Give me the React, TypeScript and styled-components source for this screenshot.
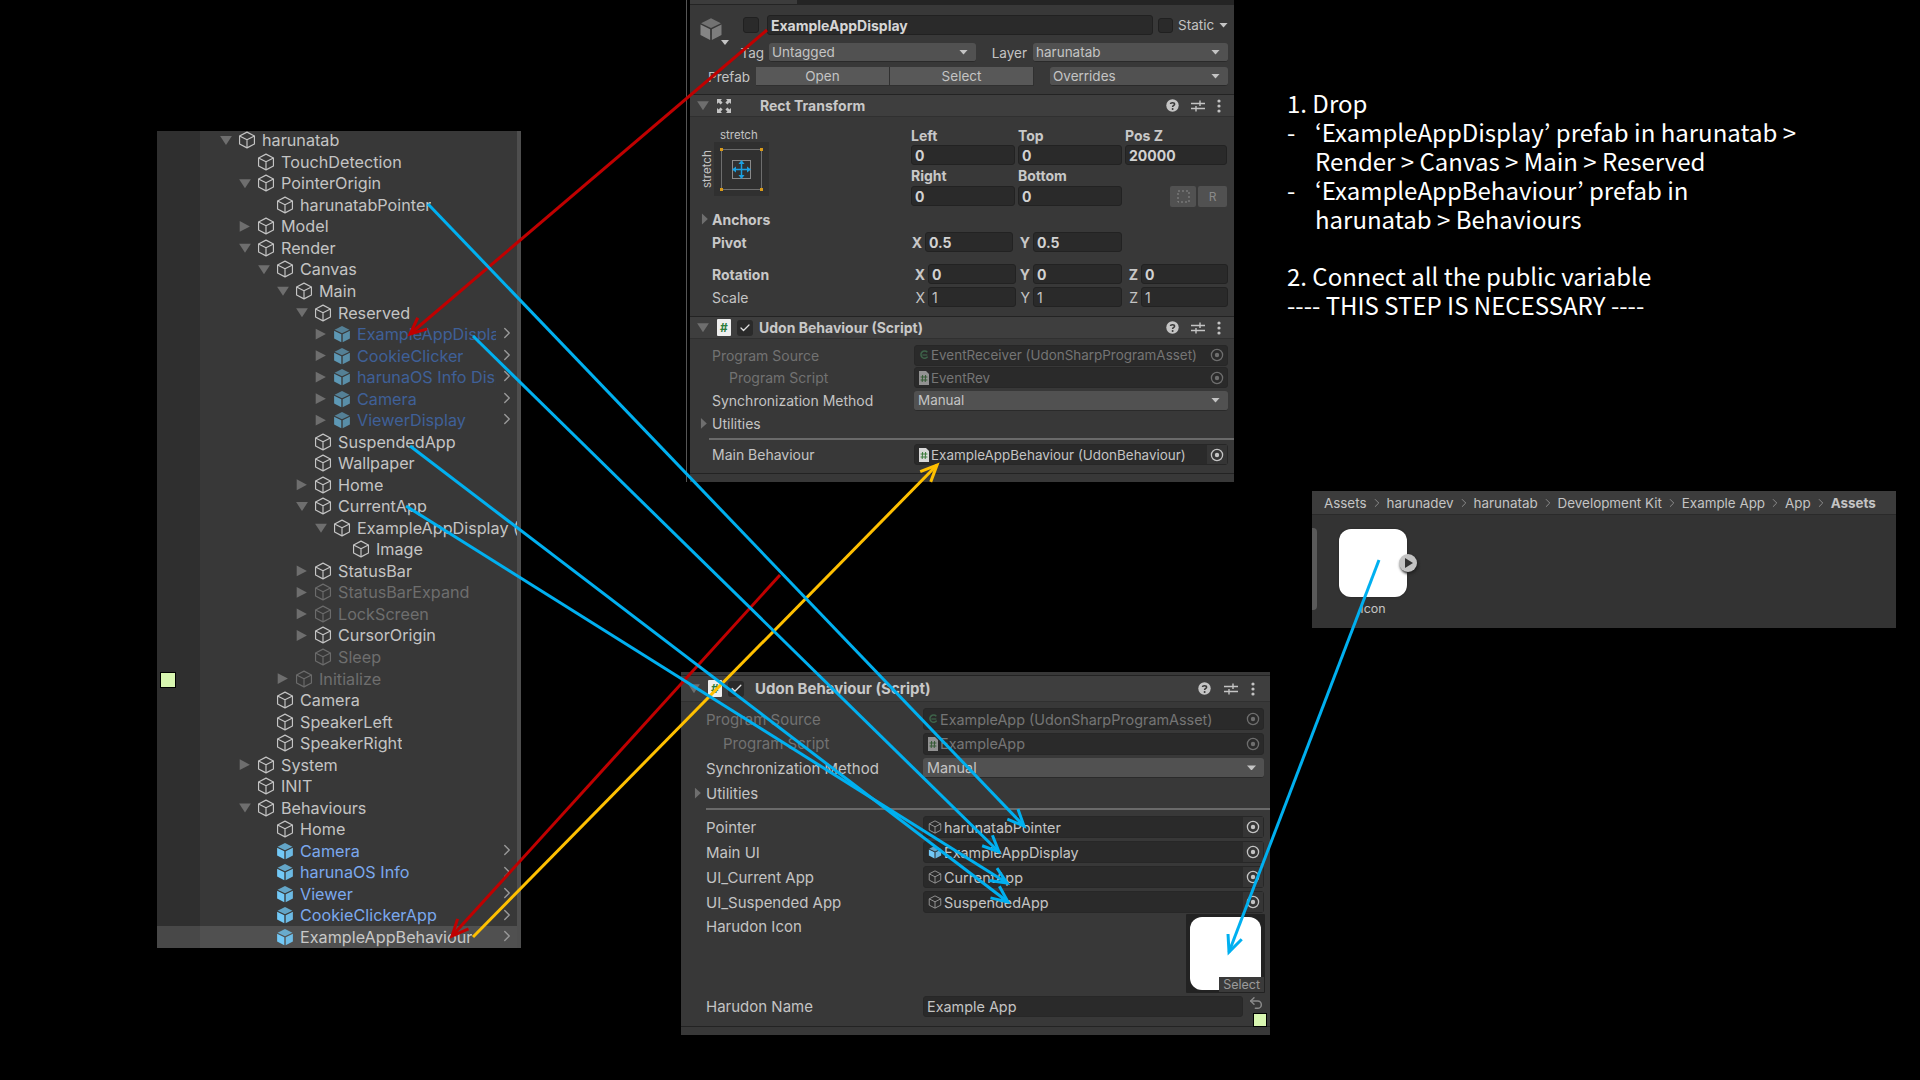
import React from "react";
import styled, { createGlobalStyle } from "styled-components";
import { Check, ChevronRight, Undo2 } from "lucide-react";

const GlobalStyle = createGlobalStyle`
  html, body {
    margin: 0;
    padding: 0;
    background: #000;
  }
  * { box-sizing: border-box; }
`;

type Node = {
  label: string;
  depth: number;
  caret?: "open" | "closed";
  prefab?: "on" | "off";
  dim?: boolean;
  more?: boolean;
  selected?: boolean;
  clip?: boolean;
};

const tree: Node[] = [
  { label: "harunatab", depth: 0, caret: "open" },
  { label: "TouchDetection", depth: 1 },
  { label: "PointerOrigin", depth: 1, caret: "open" },
  { label: "harunatabPointer", depth: 2 },
  { label: "Model", depth: 1, caret: "closed" },
  { label: "Render", depth: 1, caret: "open" },
  { label: "Canvas", depth: 2, caret: "open" },
  { label: "Main", depth: 3, caret: "open" },
  { label: "Reserved", depth: 4, caret: "open" },
  { label: "ExampleAppDisplay", depth: 5, caret: "closed", prefab: "off", more: true, clip: true },
  { label: "CookieClicker", depth: 5, caret: "closed", prefab: "off", more: true },
  { label: "harunaOS Info Display", depth: 5, caret: "closed", prefab: "off", more: true, clip: true },
  { label: "Camera", depth: 5, caret: "closed", prefab: "off", more: true },
  { label: "ViewerDisplay", depth: 5, caret: "closed", prefab: "off", more: true },
  { label: "SuspendedApp", depth: 4 },
  { label: "Wallpaper", depth: 4 },
  { label: "Home", depth: 4, caret: "closed" },
  { label: "CurrentApp", depth: 4, caret: "open" },
  { label: "ExampleAppDisplay (Clone)", depth: 5, caret: "open", clip: true },
  { label: "Image", depth: 6 },
  { label: "StatusBar", depth: 4, caret: "closed" },
  { label: "StatusBarExpand", depth: 4, caret: "closed", dim: true },
  { label: "LockScreen", depth: 4, caret: "closed", dim: true },
  { label: "CursorOrigin", depth: 4, caret: "closed" },
  { label: "Sleep", depth: 4, dim: true },
  { label: "Initialize", depth: 3, caret: "closed", dim: true },
  { label: "Camera", depth: 2 },
  { label: "SpeakerLeft", depth: 2 },
  { label: "SpeakerRight", depth: 2 },
  { label: "System", depth: 1, caret: "closed" },
  { label: "INIT", depth: 1 },
  { label: "Behaviours", depth: 1, caret: "open" },
  { label: "Home", depth: 2 },
  { label: "Camera", depth: 2, prefab: "on", more: true },
  { label: "harunaOS Info", depth: 2, prefab: "on", more: true },
  { label: "Viewer", depth: 2, prefab: "on", more: true },
  { label: "CookieClickerApp", depth: 2, prefab: "on", more: true },
  { label: "ExampleAppBehaviour", depth: 2, prefab: "on", more: true, selected: true },
];

const arrows = [
  { x1: 767, y1: 30, x2: 410, y2: 334, color: "#c00000" },
  { x1: 780, y1: 575, x2: 452, y2: 936, color: "#c00000" },
  { x1: 473, y1: 937, x2: 937, y2: 465, color: "#ffc000" },
  { x1: 428, y1: 204, x2: 1024, y2: 826, color: "#00b0f0" },
  { x1: 473, y1: 336, x2: 999, y2: 852, color: "#00b0f0" },
  { x1: 410, y1: 446, x2: 1008, y2: 902, color: "#00b0f0" },
  { x1: 406, y1: 506, x2: 1007, y2: 883, color: "#00b0f0" },
  { x1: 1379, y1: 560, x2: 1229, y2: 952, color: "#00b0f0" },
];

const crumbs = ["Assets", "harunadev", "harunatab", "Development Kit", "Example App", "App"];

const CubeIcon = ({ prefab, size = 18 }: { prefab?: boolean; size?: number }) =>
  prefab ? (
    <svg width={size} height={size} viewBox="0 0 16 16">
      <path d="M8 .8 14.6 4.2 8 7.4 1.4 4.2Z" fill="currentColor" opacity=".75" />
      <path d="M1 5 7.4 8.2V15.4L1 12Z" fill="currentColor" />
      <path d="M15 5 8.6 8.2V15.4L15 12Z" fill="currentColor" opacity=".9" />
    </svg>
  ) : (
    <svg width={size} height={size} viewBox="0 0 16 16" fill="none" stroke="currentColor" strokeWidth="1.05" strokeLinejoin="round">
      <path d="M8 1 14.6 4.4V11.6L8 15 1.4 11.6V4.4Z" />
      <path d="M1.4 4.4 8 7.8 14.6 4.4M8 7.8V15" />
    </svg>
  );

const TargetIcon = () => (
  <svg width="14" height="14" viewBox="0 0 14 14" fill="none">
    <circle cx="7" cy="7" r="5.6" stroke="currentColor" strokeWidth="1.3" />
    <circle cx="7" cy="7" r="2.2" fill="currentColor" />
  </svg>
);

const ScriptIcon = () => (
  <svg width="10" height="14" viewBox="0 0 10 14">
    <path d="M0 0H7L10 3V14H0Z" fill="#d8d8d8" />
    <path d="M3.6 4 3.2 11M6.6 4 6.2 11M1.6 6H8.4M1.6 9H8.4" stroke="#3c7a3c" strokeWidth="1" fill="none" />
  </svg>
);

const SharpIcon = () => (
  <svg width="10" height="14" viewBox="0 0 12 14" fill="none">
    <path d="M10 3.6A4.4 4.4 0 1 0 10.4 9" stroke="#4b8a5f" strokeWidth="1.8" />
    <path d="M4 7H10" stroke="#4b8a5f" strokeWidth="1.5" />
  </svg>
);

const MoveIcon = () => (
  <svg width="16" height="16" viewBox="0 0 16 16" fill="#c4c4c4">
    <path d="M1 1H6L4.6 2.6 6.6 4.6 4.6 6.6 2.6 4.6 1 6ZM15 1H10L11.4 2.6 9.4 4.6 11.4 6.6 13.4 4.6 15 6ZM1 15H6L4.6 13.4 6.6 11.4 4.6 9.4 2.6 11.4 1 10ZM15 15H10L11.4 13.4 9.4 11.4 11.4 9.4 13.4 11.4 15 10Z" />
  </svg>
);

const HeaderTools = ({ wide }: { wide?: boolean }) => (
  <Tools $wide={wide}>
    <svg width="13" height="13" viewBox="0 0 13 13">
      <circle cx="6.5" cy="6.5" r="6.2" fill="#c4c4c4" />
      <path d="M4.4 5C4.6 3.4 8.6 3.4 8.6 5.2 8.6 6.4 6.6 6.4 6.6 8" stroke="#383838" strokeWidth="1.5" fill="none" />
      <circle cx="6.6" cy="10" r="1" fill="#383838" />
    </svg>
    <svg width="14" height="14" viewBox="0 0 14 14" stroke="#c4c4c4" strokeWidth="1.4" fill="none">
      <path d="M0 4.5H14M0 9.5H14M9 1.5V7M5 7V12.5" />
    </svg>
    <svg width="4" height="14" viewBox="0 0 4 14" fill="#c4c4c4">
      <circle cx="2" cy="2" r="1.6" />
      <circle cx="2" cy="7" r="1.6" />
      <circle cx="2" cy="12" r="1.6" />
    </svg>
  </Tools>
);

const AnchorPreset = () => (
  <AnchorBox>
    <svg width="55" height="54" viewBox="0 0 55 54" fill="none">
      <rect x="7.5" y="7.5" width="40" height="40" stroke="#6e6e6e" />
      <rect x="6" y="6" width="3" height="3" fill="#d89a1a" />
      <rect x="46" y="6" width="3" height="3" fill="#d89a1a" />
      <rect x="6" y="46" width="3" height="3" fill="#d89a1a" />
      <rect x="46" y="46" width="3" height="3" fill="#d89a1a" />
      <rect x="18.5" y="18.5" width="18" height="18" stroke="#8a8a8a" />
      <path d="M20 27.5H35M27.5 20V35" stroke="#1ba1e2" strokeWidth="1.5" />
      <path d="M18 27.5 22 24.5V30.5ZM37 27.5 33 24.5V30.5ZM27.5 18 24.5 22H30.5ZM27.5 37 24.5 33H30.5Z" fill="#1ba1e2" />
    </svg>
  </AnchorBox>
);

const ObjectField = ({
  icon,
  children,
  dim,
}: {
  icon: React.ReactNode;
  children: React.ReactNode;
  dim?: boolean;
}) => (
  <Field $dim={dim}>
    <FieldIcon $dim={dim}>{icon}</FieldIcon>
    <FieldText>{children}</FieldText>
    <TargetSlot $dim={dim}>
      <TargetIcon />
    </TargetSlot>
  </Field>
);

const Prop = ({ label, indent, dim, children }: { label: string; indent?: boolean; dim?: boolean; children?: React.ReactNode }) => (
  <PropRow>
    <PropLabel $indent={indent} $dim={dim}>
      {label}
    </PropLabel>
    {children}
  </PropRow>
);

const App = () => (
  <Canvas>
    <GlobalStyle />

    <TreePanel>
      <TreeList>
        {tree.map((n, i) => (
          <TreeRow key={i} $depth={n.depth} $selected={n.selected}>
            <Caret $kind={n.caret} />
            <TreeIcon $prefab={n.prefab} $dim={n.dim}>
              <CubeIcon prefab={!!n.prefab} />
            </TreeIcon>
            <TreeLabel $prefab={n.prefab} $dim={n.dim} $clip={n.clip} $selected={n.selected}>
              {n.label}
            </TreeLabel>
            {n.more && (
              <More>
                <ChevronRight size={18} strokeWidth={1.8} />
              </More>
            )}
          </TreeRow>
        ))}
      </TreeList>
      <Marker $left={3} $top={541} />
    </TreePanel>

    <TopInspector>
      <TabStrip>
        <ActiveTab />
      </TabStrip>
      <IdentityBlock>
        <BigCube>
          <CubeIcon prefab size={24} />
          <BigCubeCaret />
        </BigCube>
        <IdentityLines>
          <NameLine>
            <CheckBox $size={16} />
            <NameField>ExampleAppDisplay</NameField>
            <CheckBox $size={15} $ml={5} />
            <StaticLabel>Static</StaticLabel>
            <MiniCaret />
          </NameLine>
          <TagLine>
            <TagLabel $w={25}>Tag</TagLabel>
            <Drop $w={207} $ml={5}>
              Untagged
              <MiniCaret />
            </Drop>
            <TagLabel $w={51}>Layer</TagLabel>
            <Drop $w={195} $ml={6}>
              harunatab
              <MiniCaret />
            </Drop>
          </TagLine>
        </IdentityLines>
      </IdentityBlock>
      <PrefabLine>
        <TagLabel $w={60}>Prefab</TagLabel>
        <PrefabButton $w={134} $ml={6}>
          Open
        </PrefabButton>
        <PrefabButton $w={144} $ml={0}>
          Select
        </PrefabButton>
        <Drop $w={178} $ml={16}>
          Overrides
          <MiniCaret />
        </Drop>
      </PrefabLine>

      <ComponentHeader $mt={8}>
        <Caret $kind="open" />
        <HeaderIcon>
          <MoveIcon />
        </HeaderIcon>
        <HeaderTitle $ml={28}>Rect Transform</HeaderTitle>
        <HeaderTools />
      </ComponentHeader>

      <RectBody>
        <AnchorColumn>
          <SmallLabel>stretch</SmallLabel>
          <AnchorInner>
            <SideLabel>stretch</SideLabel>
            <AnchorPreset />
          </AnchorInner>
        </AnchorColumn>
        <RectGrid>
          <RectLabel>Left</RectLabel>
          <RectLabel>Top</RectLabel>
          <RectLabel>Pos Z</RectLabel>
          <NumberField>0</NumberField>
          <NumberField>0</NumberField>
          <NumberField>20000</NumberField>
          <RectLabel>Right</RectLabel>
          <RectLabel>Bottom</RectLabel>
          <span />
          <NumberField>0</NumberField>
          <NumberField>0</NumberField>
          <RectButtons>
            <RectButton $w={26}>
              <svg width="13" height="13" viewBox="0 0 13 13" fill="none" stroke="#8a8a8a" strokeDasharray="2 2">
                <rect x="1" y="1" width="11" height="11" />
              </svg>
            </RectButton>
            <RectButton $w={29}>R</RectButton>
          </RectButtons>
        </RectGrid>
      </RectBody>

      <AnchorsLine>
        <Caret $kind="closed" $size={8} />
        <BoldLabel>Anchors</BoldLabel>
      </AnchorsLine>

      <VectorRow $mt={4}>
        <BoldLabel $w={198}>Pivot</BoldLabel>
        <AxisBold $w={15}>X</AxisBold>
        <NumberField $w={88} $bold>0.5</NumberField>
        <AxisBold $w={20}>Y</AxisBold>
        <NumberField $w={89} $bold>0.5</NumberField>
      </VectorRow>
      <VectorRow $mt={12}>
        <BoldLabel $w={202}>Rotation</BoldLabel>
        <AxisBold $w={14}>X</AxisBold>
        <NumberField $w={88} $bold>0</NumberField>
        <AxisBold $w={17}>Y</AxisBold>
        <NumberField $w={89} $bold>0</NumberField>
        <AxisBold $w={19}>Z</AxisBold>
        <NumberField $w={87} $bold>0</NumberField>
      </VectorRow>
      <VectorRow $mt={3}>
        <PropLabel $w={202}>Scale</PropLabel>
        <Axis $w={14}>X</Axis>
        <NumberField $w={88}>1</NumberField>
        <Axis $w={17}>Y</Axis>
        <NumberField $w={89}>1</NumberField>
        <Axis $w={19}>Z</Axis>
        <NumberField $w={87}>1</NumberField>
      </VectorRow>

      <ComponentHeader $mt={9}>
        <Caret $kind="open" />
        <HeaderIcon>
          <ScriptPage>#</ScriptPage>
        </HeaderIcon>
        <HeaderCheck>
          <Check size={12} strokeWidth={2.5} />
        </HeaderCheck>
        <HeaderTitle $ml={6}>Udon Behaviour (Script)</HeaderTitle>
        <HeaderTools />
      </ComponentHeader>

      <PropList $gap={1.8} $pad={22} $fieldAt={202} $pt={5.5} $row={21}>
        <Prop label="Program Source" dim>
          <ObjectField icon={<SharpIcon />} dim>
            EventReceiver (UdonSharpProgramAsset)
          </ObjectField>
        </Prop>
        <Prop label="Program Script" indent dim>
          <ObjectField icon={<ScriptIcon />} dim>
            EventRev
          </ObjectField>
        </Prop>
        <Prop label="Synchronization Method">
          <WideDrop>
            Manual
            <MiniCaret />
          </WideDrop>
        </Prop>
        <UtilitiesRow>
          <Caret $kind="closed" $size={8} />
          <PropLabel>Utilities</PropLabel>
        </UtilitiesRow>
      </PropList>
      <Rule $left={19} $mt={4} />
      <PropList $gap={2} $pad={22} $fieldAt={202} $pt={4.5} $row={21}>
        <Prop label="Main Behaviour">
          <ObjectField icon={<ScriptIcon />}>ExampleAppBehaviour (UdonBehaviour)</ObjectField>
        </Prop>
      </PropList>
      <BottomLine $mt={7.5} />
    </TopInspector>

    <Instructions>
      <Line>1. Drop</Line>
      <Bullet>
        <span>-</span>
        <span>
          ‘ExampleAppDisplay’ prefab in harunatab &gt;
          <br />
          Render &gt; Canvas &gt; Main &gt; Reserved
        </span>
      </Bullet>
      <Bullet>
        <span>-</span>
        <span>
          ‘ExampleAppBehaviour’ prefab in
          <br />
          harunatab &gt; Behaviours
        </span>
      </Bullet>
      <Gap />
      <Line>2. Connect all the public variable</Line>
      <Line>---- THIS STEP IS NECESSARY ----</Line>
    </Instructions>

    <ProjectPanel>
      <Breadcrumb>
        {crumbs.map((c) => (
          <React.Fragment key={c}>
            <span>{c}</span>
            <ChevronRight size={14} strokeWidth={1.4} />
          </React.Fragment>
        ))}
        <strong>Assets</strong>
      </Breadcrumb>
      <ProjectBody>
        <Splitter />
        <Asset>
          <AssetThumb>
            <PlayBadge />
          </AssetThumb>
          <AssetName>Icon</AssetName>
        </Asset>
      </ProjectBody>
    </ProjectPanel>

    <BottomInspector>
      <ComponentHeader $h={27} $mt={3}>
        <Caret $kind="open" />
        <HeaderIcon>
          <ScriptPage>#</ScriptPage>
        </HeaderIcon>
        <HeaderCheck>
          <Check size={13} strokeWidth={2.5} />
        </HeaderCheck>
        <HeaderTitle $ml={11}>Udon Behaviour (Script)</HeaderTitle>
        <HeaderTools wide />
      </ComponentHeader>
      <PropList $gap={2.7} $pad={25} $fieldAt={217} $pt={6} $row={22}>
        <Prop label="Program Source" dim>
          <ObjectField icon={<SharpIcon />} dim>
            ExampleApp (UdonSharpProgramAsset)
          </ObjectField>
        </Prop>
        <Prop label="Program Script" indent dim>
          <ObjectField icon={<ScriptIcon />} dim>
            ExampleApp
          </ObjectField>
        </Prop>
        <Prop label="Synchronization Method">
          <WideDrop>
            Manual
            <MiniCaret />
          </WideDrop>
        </Prop>
        <UtilitiesRow>
          <Caret $kind="closed" $size={8} />
          <PropLabel>Utilities</PropLabel>
        </UtilitiesRow>
      </PropList>
      <Rule $left={25} $mt={4} />
      <PropList $gap={3} $pad={25} $fieldAt={217} $pt={6} $row={22}>
        <Prop label="Pointer">
          <ObjectField icon={<GoIcon><CubeIcon size={14} /></GoIcon>}>harunatabPointer</ObjectField>
        </Prop>
        <Prop label="Main UI">
          <ObjectField icon={<PrefabIcon><CubeIcon prefab size={14} /></PrefabIcon>}>ExampleAppDisplay</ObjectField>
        </Prop>
        <Prop label="UI_Current App">
          <ObjectField icon={<GoIcon><CubeIcon size={14} /></GoIcon>}>CurrentApp</ObjectField>
        </Prop>
        <Prop label="UI_Suspended App">
          <ObjectField icon={<GoIcon><CubeIcon size={14} /></GoIcon>}>SuspendedApp</ObjectField>
        </Prop>
      </PropList>
      <IconRow>
        <IconLabel>Harudon Icon</IconLabel>
        <IconPicker>
          <IconWhite />
          <SelectTag>Select</SelectTag>
        </IconPicker>
      </IconRow>
      <NameRow>
        <PropLabel>Harudon Name</PropLabel>
        <TextField>Example App</TextField>
        <RevertIcon>
          <Undo2 size={16} strokeWidth={2.2} />
        </RevertIcon>
      </NameRow>
      <BottomLine $mt={9} />
      <Marker $left={572} $top={341} $size={14} />
    </BottomInspector>

    <ArrowLayer width="1920" height="1080" viewBox="0 0 1920 1080" fill="none" strokeWidth="3">
      {arrows.map((a, i) => {
        const angle = Math.atan2(a.y2 - a.y1, a.x2 - a.x1);
        const wing = (off: number) => `${a.x2 - 18 * Math.cos(angle + off)},${a.y2 - 18 * Math.sin(angle + off)}`;
        return (
          <g key={i} stroke={a.color}>
            <line x1={a.x1} y1={a.y1} x2={a.x2} y2={a.y2} />
            <polyline points={`${wing(0.42)} ${a.x2},${a.y2} ${wing(-0.42)}`} />
          </g>
        );
      })}
    </ArrowLayer>
  </Canvas>
);

const Canvas = styled.div`
  position: relative;
  width: 1920px;
  height: 1080px;
  overflow: hidden;
  background: #000;
  color: #c4c4c4;
  font-family: Inter, "Liberation Sans", sans-serif;
  font-size: 14px;
`;

const TreePanel = styled.div`
  position: absolute;
  left: 157px;
  top: 131px;
  width: 364px;
  height: 817px;
  overflow: hidden;
  background: linear-gradient(90deg, #2f2f2f 0 43px, #383838 43px 360px, #4e4e4e 360px);
`;

const TreeList = styled.div`
  display: flex;
  flex-direction: column;
  margin-top: -1.5px;
  width: 360px;
`;

const TreeRow = styled.div<{ $depth: number; $selected?: boolean }>`
  position: relative;
  display: flex;
  align-items: center;
  height: 21.54px;
  padding-left: ${(p) => 62 + p.$depth * 19}px;
  background: ${(p) => (p.$selected ? "rgba(255,255,255,.12)" : "transparent")};
  font-size: 16.2px;
`;

const Caret = styled.span<{ $kind?: "open" | "closed"; $size?: number }>`
  flex: none;
  width: ${(p) => p.$size ?? 14}px;
  height: 12px;
  background: ${(p) => (p.$kind ? "#6e6e6e" : "transparent")};
  clip-path: ${(p) =>
    p.$kind === "open" ? "polygon(8% 15%, 92% 15%, 50% 90%)" : "polygon(12% 5%, 85% 50%, 12% 95%)"};
`;

const TreeIcon = styled.span<{ $prefab?: string; $dim?: boolean }>`
  flex: none;
  display: flex;
  width: 18px;
  margin-left: 5px;
  color: ${(p) =>
    p.$prefab === "on" ? "#72c9f7" : p.$prefab === "off" ? "#5d98b5" : p.$dim ? "#6b6b6b" : "#c4c4c4"};
`;

const TreeLabel = styled.span<{ $prefab?: string; $dim?: boolean; $clip?: boolean; $selected?: boolean }>`
  margin-left: 6px;
  white-space: nowrap;
  overflow: hidden;
  max-width: ${(p) => (p.$clip ? (p.$prefab ? "139px" : "165px") : "none")};
  color: ${(p) =>
    p.$selected
      ? "#c8c8c8"
      : p.$prefab === "on"
      ? "#7ba8ee"
      : p.$prefab === "off"
      ? "#3f6098"
      : p.$dim
      ? "#6e6e6e"
      : "#c4c4c4"};
`;

const More = styled.span`
  position: absolute;
  left: 341px;
  top: 1px;
  display: flex;
  color: #9a9a9a;
`;

const Marker = styled.div<{ $left: number; $top: number; $size?: number }>`
  position: absolute;
  left: ${(p) => p.$left}px;
  top: ${(p) => p.$top}px;
  width: ${(p) => p.$size ?? 16}px;
  height: ${(p) => p.$size ?? 16}px;
  background: #d8f6b0;
  border: 1.5px solid #000;
`;

const TopInspector = styled.div`
  position: absolute;
  left: 690px;
  top: 0;
  width: 544px;
  height: 482px;
  overflow: hidden;
  background: #383838;
  box-shadow: -3px 0 0 #000, -4px 0 0 #555;
`;

const BottomInspector = styled.div`
  position: absolute;
  left: 681px;
  top: 672px;
  width: 589px;
  height: 363px;
  overflow: hidden;
  background: #383838;
  font-size: 15px;
`;

const TabStrip = styled.div`
  height: 5px;
  background: #242424;
`;

const ActiveTab = styled.div`
  width: 107px;
  height: 4px;
  background: #3c3c3c;
`;

const IdentityBlock = styled.div`
  display: flex;
  margin-top: 10px;
`;

const BigCube = styled.div`
  position: relative;
  flex: none;
  width: 49px;
  padding: 2px 0 0 9px;
  color: #858585;
`;

const BigCubeCaret = styled.span`
  position: absolute;
  left: 31px;
  top: 25px;
  width: 8px;
  height: 5px;
  background: #c4c4c4;
  clip-path: polygon(0 0, 100% 0, 50% 100%);
`;

const IdentityLines = styled.div`
  display: flex;
  flex-direction: column;
  gap: 8px;
`;

const NameLine = styled.div`
  display: flex;
  align-items: center;
  height: 20px;
  padding-left: 4px;
`;

const CheckBox = styled.span<{ $size: number; $ml?: number }>`
  flex: none;
  width: ${(p) => p.$size}px;
  height: ${(p) => p.$size}px;
  margin-left: ${(p) => p.$ml ?? 0}px;
  background: #2a2a2a;
  border: 1px solid #202020;
  border-radius: 3px;
`;

const NameField = styled.div`
  display: flex;
  align-items: center;
  width: 386px;
  height: 20px;
  margin-left: 8px;
  padding-left: 3px;
  background: #2a2a2a;
  border: 1px solid #212121;
  border-radius: 3px;
  color: #d6d6d6;
  font-weight: 700;
`;

const StaticLabel = styled.span`
  margin-left: 5px;
  margin-right: 3px;
  font-size: 13.5px;
`;

const MiniCaret = styled.span`
  flex: none;
  margin-left: auto;
  width: 9px;
  height: 5px;
  background: #c4c4c4;
  clip-path: polygon(0 0, 100% 0, 50% 100%);
`;

const TagLine = styled.div`
  display: flex;
  align-items: center;
  height: 19px;
`;

const PrefabLine = styled.div`
  display: flex;
  align-items: center;
  height: 19px;
  margin-top: 5px;
`;

const TagLabel = styled.span<{ $w: number }>`
  flex: none;
  width: ${(p) => p.$w}px;
  text-align: right;
  white-space: nowrap;
  font-size: 13.5px;
`;

const Drop = styled.div<{ $w: number; $ml: number }>`
  display: flex;
  align-items: center;
  flex: none;
  width: ${(p) => p.$w}px;
  height: 19px;
  margin-left: ${(p) => p.$ml}px;
  padding: 0 8px 0 3px;
  background: #515151;
  border-bottom: 1px solid #2a2a2a;
  border-radius: 3px;
  font-size: 13.5px;
`;

const WideDrop = styled.div`
  display: flex;
  align-items: center;
  flex: 1;
  height: 20px;
  padding: 0 8px 0 4px;
  background: #515151;
  border-bottom: 1px solid #2a2a2a;
  border-radius: 3px;
  font-size: 0.96em;
`;

const PrefabButton = styled.div<{ $w: number; $ml: number }>`
  display: flex;
  align-items: center;
  justify-content: center;
  flex: none;
  width: ${(p) => p.$w}px;
  height: 19px;
  margin-left: ${(p) => p.$ml}px;
  background: #585858;
  border: 1px solid #303030;
  border-width: 0 1px 1px 0;
  font-size: 13.5px;
`;

const ComponentHeader = styled.div<{ $mt?: number; $h?: number }>`
  display: flex;
  align-items: center;
  height: ${(p) => p.$h ?? 23}px;
  margin-top: ${(p) => p.$mt ?? 0}px;
  padding-left: 6px;
  background: #3e3e3e;
  border-top: 1px solid #232323;
  border-bottom: 1px solid #303030;
`;

const HeaderIcon = styled.span`
  display: flex;
  flex: none;
  justify-content: center;
  width: 16px;
  margin-left: 6px;
`;

const ScriptPage = styled.span`
  display: flex;
  align-items: center;
  justify-content: center;
  width: 14px;
  height: 17px;
  background: #eee;
  border-radius: 1px;
  color: #2b7a3a;
  font-size: 12px;
  font-weight: 700;
`;

const HeaderCheck = styled.span`
  display: flex;
  align-items: center;
  justify-content: center;
  flex: none;
  width: 16px;
  height: 16px;
  margin-left: 5px;
  background: #2a2a2a;
  border-radius: 3px;
  color: #e0e0e0;
`;

const HeaderTitle = styled.span<{ $ml: number }>`
  margin-left: ${(p) => p.$ml}px;
  color: #c8c8c8;
  font-weight: 700;
`;

const Tools = styled.span<{ $wide?: boolean }>`
  display: flex;
  align-items: center;
  gap: ${(p) => (p.$wide ? 13 : 12)}px;
  margin-left: auto;
  margin-right: ${(p) => (p.$wide ? 15 : 13)}px;
`;

const RectBody = styled.div`
  display: flex;
  margin-top: 8px;
  height: 81px;
`;

const AnchorColumn = styled.div`
  display: flex;
  flex: none;
  flex-direction: column;
  width: 221px;
  padding: 3px 0 0 11px;
`;

const SmallLabel = styled.span`
  margin-left: 19px;
  height: 14px;
  line-height: 14px;
  font-size: 11.5px;
`;

const AnchorInner = styled.div`
  display: flex;
  align-items: flex-start;
`;

const SideLabel = styled.span`
  flex: none;
  width: 13px;
  height: 54px;
  writing-mode: vertical-rl;
  transform: rotate(180deg);
  text-align: center;
  line-height: 13px;
  font-size: 11.5px;
`;

const AnchorBox = styled.div`
  display: flex;
  width: 55px;
  height: 54px;
  background: #303030;
`;

const RectGrid = styled.div`
  display: grid;
  grid-template-columns: 104px 104px 102px;
  grid-template-rows: 20px 20px 21px 20px;
  column-gap: 3px;
  align-items: center;
`;

const RectLabel = styled.span`
  font-weight: 700;
  color: #c8c8c8;
`;

const NumberField = styled.div<{ $w?: number; $bold?: boolean }>`
  display: flex;
  align-items: center;
  flex: none;
  width: ${(p) => (p.$w ? `${p.$w}px` : "auto")};
  height: 20px;
  padding-left: 3px;
  background: #2a2a2a;
  border: 1px solid #222;
  border-radius: 3px;
  font-weight: ${(p) => (p.$w && !p.$bold ? 400 : 700)};
  color: ${(p) => (p.$w && !p.$bold ? "#c4c4c4" : "#d2d2d2")};
`;

const RectButtons = styled.div`
  display: flex;
  justify-content: flex-end;
  gap: 2px;
`;

const RectButton = styled.div<{ $w: number }>`
  display: flex;
  align-items: center;
  justify-content: center;
  width: ${(p) => p.$w}px;
  height: 21px;
  background: #515151;
  border-radius: 2px;
  color: #8a8a8a;
  font-size: 12px;
`;

const AnchorsLine = styled.div`
  display: flex;
  align-items: center;
  gap: 3px;
  height: 18px;
  margin-top: 4px;
  padding-left: 11px;
`;

const BoldLabel = styled.span<{ $w?: number }>`
  flex: none;
  width: ${(p) => (p.$w ? `${p.$w}px` : "auto")};
  color: #c8c8c8;
  font-weight: 700;
`;

const VectorRow = styled.div<{ $mt: number }>`
  display: flex;
  align-items: center;
  height: 20px;
  margin-top: ${(p) => p.$mt}px;
  padding-left: 22px;
`;

const Axis = styled.span<{ $w: number }>`
  flex: none;
  width: ${(p) => p.$w}px;
  padding-right: 3px;
  text-align: right;
`;

const AxisBold = styled(Axis)`
  font-weight: 700;
  color: #c8c8c8;
`;

const PropList = styled.div<{ $gap: number; $pad: number; $fieldAt: number; $pt: number; $row: number }>`
  display: flex;
  flex-direction: column;
  gap: ${(p) => p.$gap}px;
  padding: ${(p) => p.$pt}px 6px 0 ${(p) => p.$pad}px;
  --field-at: ${(p) => p.$fieldAt}px;
  --row-h: ${(p) => p.$row}px;
`;

const PropRow = styled.div`
  display: flex;
  align-items: center;
  height: var(--row-h);
`;

const UtilitiesRow = styled(PropRow)`
  margin-left: -12px;
  gap: 4px;
`;

const PropLabel = styled.span<{ $indent?: boolean; $dim?: boolean; $w?: number }>`
  flex: none;
  width: ${(p) => (p.$w ? `${p.$w}px` : "var(--field-at, 217px)")};
  padding-left: ${(p) => (p.$indent ? 17 : 0)}px;
  color: ${(p) => (p.$dim ? "#727272" : "#c4c4c4")};
`;

const Field = styled.div<{ $dim?: boolean }>`
  display: flex;
  align-items: center;
  flex: 1;
  min-width: 0;
  height: 100%;
  padding-left: 4px;
  background: #2a2a2a;
  border: 1px solid #272727;
  border-radius: 3px;
  font-size: 0.96em;
  color: ${(p) => (p.$dim ? "#757575" : "#c4c4c4")};
`;

const FieldIcon = styled.span<{ $dim?: boolean }>`
  display: flex;
  flex: none;
  margin-right: 2px;
  opacity: ${(p) => (p.$dim ? 0.6 : 1)};
`;

const GoIcon = styled.span`
  display: flex;
  color: #9a9a9a;
`;

const PrefabIcon = styled.span`
  display: flex;
  color: #72c9f7;
`;

const FieldText = styled.span`
  flex: 1;
  white-space: nowrap;
  overflow: hidden;
`;

const TargetSlot = styled.span<{ $dim?: boolean }>`
  display: flex;
  align-items: center;
  justify-content: center;
  flex: none;
  width: 20px;
  height: 100%;
  background: ${(p) => (p.$dim ? "transparent" : "#353535")};
  color: ${(p) => (p.$dim ? "#6e6e6e" : "#c4c4c4")};
`;

const Rule = styled.div<{ $left: number; $mt: number }>`
  height: 2px;
  margin-top: ${(p) => p.$mt}px;
  margin-left: ${(p) => p.$left}px;
  background: #6a6a6a;
`;

const BottomLine = styled.div<{ $mt: number }>`
  height: 1px;
  margin-top: ${(p) => p.$mt}px;
  background: #232323;
`;

const IconRow = styled.div`
  display: flex;
  align-items: flex-start;
  height: 82px;
  margin-top: 1px;
  padding-left: 25px;
`;

const IconLabel = styled.span`
  flex: none;
  width: 480px;
  padding-top: 3px;
`;

const IconPicker = styled.div`
  position: relative;
  display: flex;
  flex: none;
  width: 79px;
  height: 79px;
  padding: 3px 4px;
  background: #222;
  border-radius: 1px;
`;

const IconWhite = styled.div`
  flex: 1;
  background: #fff;
  border-radius: 12px;
`;

const SelectTag = styled.span`
  position: absolute;
  right: 1px;
  bottom: 1px;
  padding: 0 4px;
  background: #3a3a3a;
  color: #9a9a9a;
  font-size: 12.5px;
  line-height: 15px;
`;

const NameRow = styled.div`
  display: flex;
  align-items: center;
  height: 21px;
  padding-left: 25px;
`;

const TextField = styled.div`
  display: flex;
  align-items: center;
  width: 320px;
  height: 21px;
  padding-left: 3px;
  background: #2a2a2a;
  border: 1px solid #272727;
  border-radius: 3px;
  font-size: 0.96em;
`;

const RevertIcon = styled.span`
  display: flex;
  margin: -8px 0 0 5px;
  color: #8a8a8a;
`;

const Instructions = styled.div`
  position: absolute;
  left: 1287px;
  top: 88px;
  color: #fff;
  font-family: "Noto Sans CJK KR", "Noto Sans", sans-serif;
  font-size: 24px;
  line-height: 29px;
`;

const Line = styled.div`
  height: 29px;
  white-space: nowrap;
`;

const Bullet = styled.div`
  display: grid;
  grid-template-columns: 28px 1fr;
  white-space: nowrap;
`;

const Gap = styled.div`
  height: 28px;
`;

const ProjectPanel = styled.div`
  position: absolute;
  left: 1312px;
  top: 491px;
  width: 584px;
  height: 137px;
  overflow: hidden;
  background: #333;
`;

const Breadcrumb = styled.div`
  display: flex;
  align-items: center;
  gap: 3px;
  height: 24px;
  padding-left: 12px;
  background: #3c3c3c;
  border-bottom: 1px solid #2a2a2a;
  font-size: 13.4px;
  white-space: nowrap;
  svg {
    color: #9a9a9a;
  }
  strong {
    font-weight: 700;
  }
`;

const ProjectBody = styled.div`
  display: flex;
  height: 113px;
`;

const Splitter = styled.div`
  flex: none;
  align-self: flex-start;
  width: 5px;
  height: 82px;
  margin-top: 13px;
  background: #5a5a5a;
  border-radius: 0 4px 4px 0;
`;

const Asset = styled.div`
  display: flex;
  flex-direction: column;
  align-items: center;
  width: 68px;
  margin: 14px 0 0 22px;
`;

const AssetThumb = styled.div`
  position: relative;
  width: 68px;
  height: 68px;
  background: #fff;
  border-radius: 12px;
  box-shadow: 0 0 2px #222;
`;

const PlayBadge = styled.span`
  position: absolute;
  left: 60px;
  top: 25px;
  width: 18px;
  height: 18px;
  border-radius: 50%;
  background: #c4c4c4;
  box-shadow: 1px 2px 3px #222;
  &::after {
    content: "";
    position: absolute;
    left: 6px;
    top: 4px;
    border-left: 8px solid #333;
    border-top: 5px solid transparent;
    border-bottom: 5px solid transparent;
  }
`;

const AssetName = styled.span`
  margin-top: 4px;
  font-size: 12.5px;
`;

const ArrowLayer = styled.svg`
  position: absolute;
  left: 0;
  top: 0;
  pointer-events: none;
`;

export default App;
